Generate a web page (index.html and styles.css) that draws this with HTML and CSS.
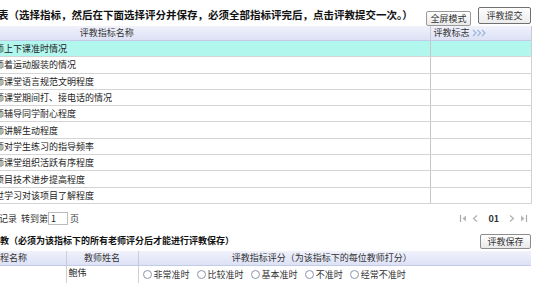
FILE: index.html
```html
<!DOCTYPE html>
<html lang="zh">
<head>
<meta charset="utf-8">
<link rel="stylesheet" href="styles.css">
</head>
<body>
<div class="page">
  <div class="topbar">
    <div class="note">表（选择指标，然后在下面选择评分并保存，必须全部指标评完后，点击评教提交一次。）</div>
    <div class="tools">
      <button class="btn btn-small">全屏模式</button>
      <button class="btn btn-main">评教提交</button>
    </div>
  </div>

  <table class="grid">
    <colgroup><col class="c-name"><col class="c-flag"></colgroup>
    <thead>
      <tr>
        <th class="h-name">评教指标名称</th>
        <th class="h-flag">评教标志 <svg class="more" width="15" height="8" viewBox="0 0 15 8"><path d="M1 1l3 3-3 3M5.5 1l3 3-3 3M10 1l3 3-3 3" fill="none" stroke="#9db4de" stroke-width="1.2"/></svg></th>
      </tr>
    </thead>
    <tbody>
      <tr class="sel"><td><span class="cut">教师上下课准时情况</span></td><td></td></tr>
      <tr><td><span class="cut">教师着运动服装的情况</span></td><td></td></tr>
      <tr><td><span class="cut">教师课堂语言规范文明程度</span></td><td></td></tr>
      <tr><td><span class="cut">教师课堂期间打、接电话的情况</span></td><td></td></tr>
      <tr><td><span class="cut">教师辅导同学耐心程度</span></td><td></td></tr>
      <tr><td><span class="cut">教师讲解生动程度</span></td><td></td></tr>
      <tr><td><span class="cut">教师对学生练习的指导频率</span></td><td></td></tr>
      <tr><td><span class="cut">教师课堂组织活跃有序程度</span></td><td></td></tr>
      <tr><td><span class="cut">本项目技术进步提高程度</span></td><td></td></tr>
      <tr><td><span class="cut">通过学习对该项目了解程度</span></td><td></td></tr>
    </tbody>
  </table>

  <div class="pager">
    <div class="goto"><span class="cut2">共10条记录</span> 转到第<input class="pg-input" type="text" value="1">页</div>
    <div class="nav">
      <svg width="9" height="9" viewBox="0 0 9 9"><path d="M1.5 1v7" stroke="#a9a9a9" stroke-width="1.2"/><path d="M7 1.5L3.5 4.5 7 7.5z" fill="#b5b5b5"/></svg>
      <svg width="9" height="9" viewBox="0 0 9 9"><path d="M6 1.5L2.5 4.5 6 7.5" fill="none" stroke="#b0b0b0" stroke-width="1.2"/></svg>
      <span class="pg-num">01</span>
      <svg width="9" height="9" viewBox="0 0 9 9"><path d="M3 1.5L6.5 4.5 3 7.5" fill="none" stroke="#b0b0b0" stroke-width="1.2"/></svg>
      <svg width="9" height="9" viewBox="0 0 9 9"><path d="M2 1.5L5.5 4.5 2 7.5z" fill="#b5b5b5"/><path d="M7.5 1v7" stroke="#a9a9a9" stroke-width="1.2"/></svg>
    </div>
  </div>

  <div class="sechead">
    <div class="sectitle"><span class="cut3">评</span>教（必须为该指标下的所有老师评分后才能进行评教保存）</div>
    <button class="btn btn-save">评教保存</button>
  </div>

  <table class="grid2">
    <colgroup><col class="k1"><col class="k2"><col class="k3"></colgroup>
    <thead>
      <tr>
        <th class="t-course"><span class="cut4">课程名称</span></th>
        <th>教师姓名</th>
        <th class="t-score">评教指标评分（为该指标下的每位教师打分）</th>
      </tr>
    </thead>
    <tbody>
      <tr>
        <td></td>
        <td class="tname">鲍伟</td>
        <td class="opts">
          <label class="opt"><span class="radio"></span>非常准时</label>
          <label class="opt"><span class="radio"></span>比较准时</label>
          <label class="opt"><span class="radio"></span>基本准时</label>
          <label class="opt"><span class="radio"></span>不准时</label>
          <label class="opt"><span class="radio"></span>经常不准时</label>
        </td>
      </tr>
    </tbody>
  </table>
</div>
</body>
</html>
```

FILE: styles.css
```css
html, body {
  margin: 0;
  padding: 0;
  background: #fff;
  overflow: hidden;
}
body {
  font-family: "Noto Sans CJK SC", "Noto Sans", sans-serif;
  font-size: 9px;
  color: #222;
}
.page {
  width: 531px;
}
.topbar {
  display: flex;
  justify-content: space-between;
  height: 26px;
}
.note {
  font-weight: bold;
  font-size: 10.5px;
  line-height: 12px;
  padding-top: 9px;
  color: #111;
  white-space: nowrap;
  overflow: hidden;
  margin-left: -2px;
}
.tools {
  display: flex;
  align-items: flex-start;
}
.btn {
  font-family: "Noto Sans CJK SC", sans-serif;
  font-size: 9px;
  color: #333;
  padding: 0;
  background: linear-gradient(#ffffff, #e9e9e9);
  border: 1px solid #9a9a9a;
  border-radius: 2px;
  line-height: 1;
}
.btn-small {
  width: 45px;
  height: 15px;
  margin-top: 11px;
}
.btn-main {
  width: 53px;
  height: 17px;
  margin-top: 7px;
  margin-left: 7px;
  border: 1px solid #707070;
  background: linear-gradient(#fdfdfd, #ececec);
}

.grid {
  width: 531px;
  border-collapse: collapse;
  table-layout: fixed;
}
.c-name { width: 430px; }
.c-flag { width: 101px; }
.grid th {
  height: 14px;
  padding: 0;
  font-weight: normal;
  font-size: 9px;
  color: #333;
  background: linear-gradient(#f0f1fb, #dce1f5);
  border-bottom: 1px solid #c4cbe6;
  line-height: 14px;
}
.h-name {
  text-align: center;
  padding-right: 216px !important;
}
.h-flag {
  text-align: left;
  padding-left: 3px !important;
  border-left: 1px solid #c9cbd6;
  border-right: 1px solid #c9cbd6;
  white-space: nowrap;
}
.more {
  vertical-align: -1px;
}
.grid td {
  height: 15.3px;
  padding: 0;
  border-bottom: 1px solid #d4d4d4;
  line-height: 15px;
  white-space: nowrap;
  overflow: hidden;
}
.grid td + td {
  border-left: 1px solid #c6c6c6;
  border-right: 1px solid #d0d0d0;
}
.grid tr.sel td {
  background: #b1f7ee;
}
.cut {
  display: inline-block;
  margin-left: -14px;
}

.pager {
  display: flex;
  justify-content: space-between;
  align-items: center;
  height: 27px;
  padding-top: 2px;
  box-sizing: border-box;
}
.goto {
  display: flex;
  align-items: center;
  white-space: nowrap;
  color: #333;
}
.cut2 {
  display: inline-block;
  margin-left: -29px;
  margin-right: 4px;
}
.pg-input {
  width: 20px;
  height: 13px;
  box-sizing: border-box;
  border: 1px solid #bbb;
  font-size: 9px;
  padding: 0 2px;
  margin: 0 2px 0 0;
  font-family: "Noto Sans CJK SC", sans-serif;
  color: #222;
}
.nav {
  display: flex;
  align-items: center;
  gap: 3px;
  margin-right: 3px;
}
.nav svg {
  display: block;
}
.pg-num {
  font-weight: bold;
  font-size: 9px;
  color: #333;
  margin: 0 5px;
}

.sechead {
  display: flex;
  justify-content: space-between;
  align-items: flex-start;
  height: 20px;
}
.sectitle {
  font-weight: bold;
  font-size: 9px;
  line-height: 12px;
  padding-top: 4px;
  color: #111;
  white-space: nowrap;
}
.cut3 {
  display: inline-block;
  margin-left: -9px;
}
.btn-save {
  width: 51px;
  height: 15px;
  margin-top: 3px;
  border: 1px solid #8d8d8d;
}

.grid2 {
  width: 531px;
  border-collapse: collapse;
  table-layout: fixed;
}
.k1 { width: 66px; }
.k2 { width: 72px; }
.k3 { width: 393px; }
.grid2 th {
  height: 14px;
  padding: 0;
  font-weight: normal;
  font-size: 9px;
  color: #333;
  background: linear-gradient(#f0f1fb, #dce1f5);
  border-bottom: 1px solid #c4cbe6;
  border-left: 1px solid #c9cbd6;
  line-height: 14px;
  white-space: nowrap;
  overflow: hidden;
}
.grid2 th.t-course {
  text-align: left;
  border-left: none;
}
.cut4 {
  display: inline-block;
  margin-left: -9px;
}
.grid2 th.t-score {
  padding-right: 26px;
}
.grid2 td {
  height: 18px;
  padding: 0;
  border-left: 1px solid #d0d0d0;
  vertical-align: middle;
  white-space: nowrap;
}
.grid2 td:first-child {
  border-left: none;
}
.tname {
  padding-left: 2px !important;
  vertical-align: top !important;
  line-height: 14px;
}
.opts {
  padding-left: 4px !important;
}
.opt {
  display: inline-flex;
  align-items: center;
  margin-right: 5px;
  color: #333;
}
.radio {
  display: inline-block;
  width: 7px;
  height: 7px;
  border: 1px solid #8a93a8;
  border-radius: 50%;
  margin-right: 2px;
  background: #fff;
}
```
